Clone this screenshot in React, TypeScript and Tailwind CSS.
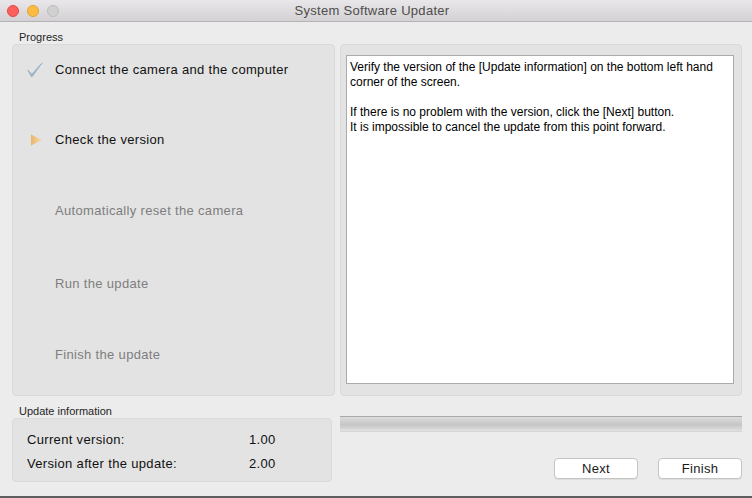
import React from 'react';

const steps = [
    { label: 'Connect the camera and the computer', state: 'done', gap: 'mt-[15px]' },
    { label: 'Check the version', state: 'current', gap: 'mt-[50px]' },
    { label: 'Automatically reset the camera', state: 'todo', gap: 'mt-[51px]' },
    { label: 'Run the update', state: 'todo', gap: 'mt-[53px]' },
    { label: 'Finish the update', state: 'todo', gap: 'mt-[51px]' },
];

function CheckMark() {
    return (
        <svg width="16" height="16" viewBox="0 0 16 16">
            <path d="M0.8 8.2 L4.8 15 L15.2 0.8 L4.9 12.2 Z" fill="#9db3c6" stroke="#9db3c6" strokeWidth="1" strokeLinejoin="round" />
        </svg>
    );
}

function Arrow() {
    return (
        <svg width="13" height="12" viewBox="0 0 13 12">
            <defs>
                <linearGradient id="arr" x1="0" y1="0" x2="1" y2="0">
                    <stop offset="0" stopColor="#e9b56e" />
                    <stop offset="1" stopColor="#f6d9a8" />
                </linearGradient>
            </defs>
            <polygon points="1,0.5 12,6 1,11.5" fill="url(#arr)" />
        </svg>
    );
}

export default function App() {
    return (
        <div className="w-[752px] h-[498px] bg-[#ececec] flex flex-col overflow-hidden text-[#1a1a1a]" style={{ fontFamily: '"Liberation Sans", Arial, sans-serif' }}>
            {/* title bar */}
            <div className="relative h-[22px] shrink-0 flex items-center justify-center pr-[8px] bg-[linear-gradient(#e9e7e9,#d3d1d3)] border-b border-[#b3b3b3]">
                <div className="absolute left-[7px] top-[5px] flex gap-[8px]">
                    <div className="w-[12px] h-[12px] rounded-full bg-[#fc605c] border border-[#de4a43]" />
                    <div className="w-[12px] h-[12px] rounded-full bg-[#fdbc40] border border-[#dea236]" />
                    <div className="w-[12px] h-[12px] rounded-full bg-[#d0d0d0] border border-[#bdbdbd]" />
                </div>
                <span className="text-[13px] tracking-[0.3px] text-[#4d4d4d] pt-[1px]">System Software Updater</span>
            </div>

            <div className="flex flex-1 pl-[12px] gap-[5px]">
                {/* left column */}
                <div className="w-[323px] flex flex-col">
                    <div className="h-[22px] pt-[9px] pl-[7px] text-[11px] leading-[13px] text-[#262626]">Progress</div>
                    <div className="h-[352px] rounded-[4px] bg-[#e3e3e3] border border-[#dadada] flex flex-col">
                        {steps.map(step => (
                            <div key={step.label} className={`h-[20px] flex items-center ${step.gap}`}>
                                <div className="w-[42px] flex justify-end pr-[12px]">
                                    {step.state === 'done' && <CheckMark />}
                                    {step.state === 'current' && <Arrow />}
                                </div>
                                <span className={`text-[13px] tracking-[0.33px] ${step.state === 'todo' ? 'text-[#7e7e7e]' : 'text-[#111]'}`}>{step.label}</span>
                            </div>
                        ))}
                    </div>
                    <div className="h-[22px] pt-[9px] pl-[7px] text-[11px] leading-[13px] text-[#262626]">Update information</div>
                    <div className="w-[320px] h-[64px] rounded-[4px] bg-[#e3e3e3] border border-[#dadada] flex flex-col pl-[14px] pt-[12px] gap-[6px] text-[13px] tracking-[0.33px] text-[#111]">
                        <div className="flex h-[18px] items-center">
                            <span className="w-[222px]">Current version:</span>
                            <span>1.00</span>
                        </div>
                        <div className="flex h-[18px] items-center">
                            <span className="w-[222px]">Version after the update:</span>
                            <span>2.00</span>
                        </div>
                    </div>
                </div>

                {/* right column */}
                <div className="w-[402px] flex flex-col pt-[22px]">
                    <div className="h-[352px] rounded-[4px] bg-[#e3e3e3] border border-[#dadada] pt-[10px] pl-[5px] pr-[7px] pb-[11px]">
                        <div className="h-full bg-white border border-[#ababab] px-[3px] pt-[4px] text-[12px] leading-[15px] text-black">
                            <p>Verify the version of the [Update information] on the bottom left hand corner of the screen.</p>
                            <p className="mt-[15px]">If there is no problem with the version, click the [Next] button.</p>
                            <p>It is impossible to cancel the update from this point forward.</p>
                        </div>
                    </div>
                    <div className="mt-[20px] h-[16px] border-t border-[#a9a9a9] border-b border-b-[#d6d6d6] bg-[linear-gradient(#dcdcdc,#d0d0d0_30%,#c6c6c6_55%,#d4d4d4_80%,#e2e2e2)]" />
                    <div className="mt-[26px] flex justify-end gap-[20px]">
                        <button className="w-[84px] h-[21px] bg-white border border-[#c4c4c4] rounded-[4px] shadow-[0_1px_0_rgba(0,0,0,0.06)] text-[13px] tracking-[0.3px] text-[#1a1a1a]">Next</button>
                        <button className="w-[84px] h-[21px] bg-white border border-[#c4c4c4] rounded-[4px] shadow-[0_1px_0_rgba(0,0,0,0.06)] text-[13px] tracking-[0.3px] text-[#1a1a1a]">Finish</button>
                    </div>
                </div>
            </div>
            <div className="h-[2px] shrink-0 bg-[#5e5e5e]" />
        </div>
    );
}
